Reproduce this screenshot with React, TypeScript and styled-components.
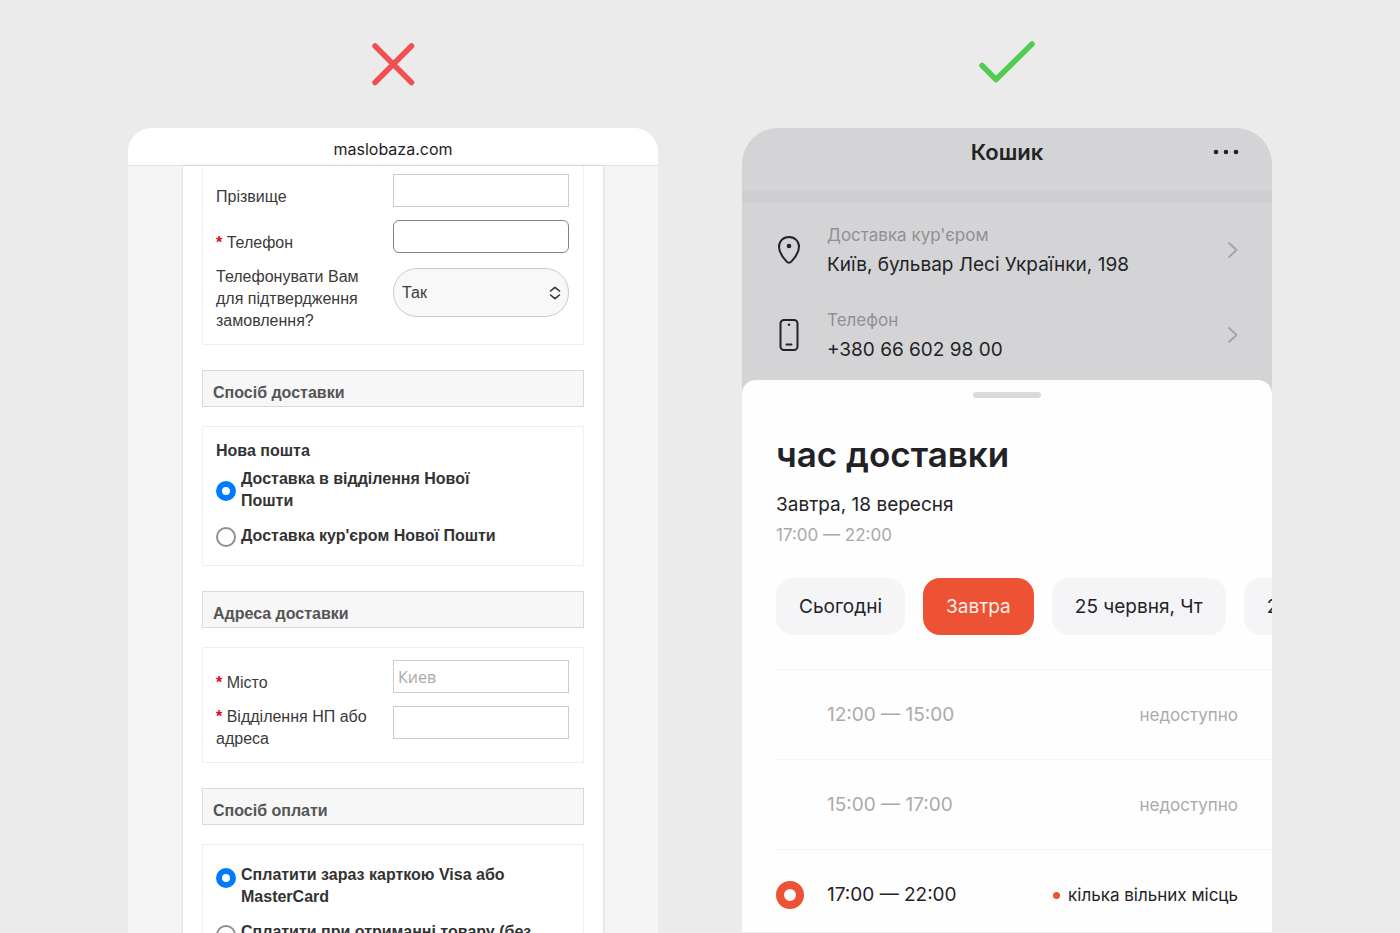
import React from "react";
import styled, { createGlobalStyle } from "styled-components";

const GlobalStyle = createGlobalStyle`
  *, *::before, *::after { box-sizing: border-box; }
  body { margin: 0; background: #ebebeb; }
  h1, h2, h3, p, ul, fieldset { margin: 0; padding: 0; }
  input, select, button { font: inherit; color: inherit; margin: 0; }
`;

const helvetica = `"Liberation Sans", Arial, sans-serif`;
const inter = `Inter, "Noto Sans", sans-serif`;

const Page = styled.main`
  display: grid;
  grid-template-columns: minmax(0, 1fr) minmax(0, 1fr);
  gap: 84px;
  height: 100vh;
  padding: 0 128px;
  overflow: hidden;
`;

const Example = styled.section`
  display: flex;
  flex-direction: column;
  min-width: 0;
`;

const Verdict = styled.div`
  display: flex;
  flex: none;
  justify-content: center;
  height: 128px;
  padding-top: 34px;
`;

/* ---------- browser page ---------- */

const Browser = styled.div`
  flex: none;
  overflow: hidden;
  border-radius: 24px 24px 0 0;
  background: #f5f5f5;
  color: #3a3a3a;
  font: 16px/22px ${helvetica};
`;

const AddressBar = styled.header`
  display: flex;
  align-items: center;
  justify-content: center;
  height: 38px;
  padding-top: 4px;
  border-bottom: 1px solid #e4e4e4;
  background: #fff;
  color: #1c1c1e;
  font: 16px/20px ${inter};
`;

const Sheet = styled.form`
  margin: 0 55px;
  padding: 0 19px 24px;
  background: #fff;
  box-shadow: 0 0 3px rgba(0, 0, 0, 0.18);
`;

const Box = styled.div<{ $cut?: boolean }>`
  display: flex;
  flex-direction: column;
  gap: 12px;
  margin-bottom: 25px;
  padding: ${(p) => (p.$cut ? "8px" : "12px")} 14px 12px 13px;
  border: 1px solid #efefef;
  border-top-width: ${(p) => (p.$cut ? "0" : "1px")};
`;

const SectionTitle = styled.h2`
  height: 37px;
  margin-bottom: 19px;
  padding: 11px 10px 0;
  border: 1px solid #d9d9d9;
  background: #f7f7f7;
  color: #555;
  font-size: 16px;
  line-height: 22px;
`;

const Field = styled.div<{ $tall?: boolean }>`
  display: grid;
  grid-template-columns: 1fr 176px;
  align-items: ${(p) => (p.$tall ? "start" : "end")};
  min-height: 34px;
`;

const Required = styled.span`
  color: #e30613;
  font-weight: bold;
`;

const TextInput = styled.input<{ $rounded?: boolean }>`
  width: 100%;
  height: 33px;
  align-self: start;
  padding: 0 4px;
  border: 1px solid ${(p) => (p.$rounded ? "#858585" : "#ccc")};
  border-radius: ${(p) => (p.$rounded ? "6px" : "0")};
  background: #fff;
  font: 16px/22px "Open Sans", "Noto Sans", sans-serif;
  &::placeholder { color: #a9a9a9; opacity: 1; }
`;

const SelectWrap = styled.div`
  display: grid;
  align-items: center;
  margin-top: 2px;
  > * { grid-area: 1 / 1; }
  > svg { justify-self: end; margin-right: 8px; pointer-events: none; }
`;

const Select = styled.select`
  appearance: none;
  width: 100%;
  height: 49px;
  padding: 0 8px;
  border: 1px solid #cbcbcb;
  border-radius: 24px;
  background: #f8f8f8;
`;

const OptionList = styled.fieldset`
  display: flex;
  flex-direction: column;
  gap: 13px;
  min-width: 0;
  border: 0;
`;

const Carrier = styled.h3`
  margin-bottom: -12px;
  color: #333;
  font-size: 16px;
  line-height: 22px;
`;

const Option = styled.label<{ $top?: boolean }>`
  display: flex;
  align-items: ${(p) => (p.$top ? "flex-start" : "center")};
  gap: 5px;
  color: #333;
  font-weight: bold;
  > input { margin-top: ${(p) => (p.$top ? "4px" : "1px")}; }
`;

const Radio = styled.input`
  appearance: none;
  flex: none;
  width: 20px;
  height: 20px;
  border: 2px solid #8f8f8f;
  border-radius: 50%;
  background: #fff;
  &:checked { border: 6px solid #007aff; }
`;

const BoxPad = styled.div`
  display: flex;
  flex-direction: column;
  gap: 18px;
`;

const DeliveryPad = styled(BoxPad)`
  padding: 1px 0 6px;
`;

const PaymentPad = styled(BoxPad)`
  padding: 7px 0;
`;

/* ---------- app screen ---------- */

const Screen = styled.div`
  flex: none;
  overflow: hidden;
  border-radius: 36px 36px 0 0;
  background: #d4d4d6;
  color: #232327;
  font: 19px/30px ${inter};
`;

const AppBar = styled.header`
  display: grid;
  grid-template-columns: 1fr auto 1fr;
  align-items: center;
  height: 75px;
  padding: 0 30px 15px;
  border-bottom: 12px solid #cfcfd1;
`;

const AppTitle = styled.h2`
  grid-column: 2;
  font-size: 22px;
  font-weight: 600;
  line-height: 28px;
`;

const MoreButton = styled.button`
  display: flex;
  justify-self: end;
  padding: 0;
  border: 0;
  background: none;
`;

const InfoRow = styled.a`
  display: grid;
  grid-template-columns: 51px 1fr auto;
  align-items: center;
  height: 85px;
  padding: 0 34px;
  color: inherit;
  text-decoration: none;
`;

const InfoLabel = styled.span`
  display: block;
  color: #909094;
  font-size: 17px;
`;

const InfoValue = styled.span`
  display: block;
`;

const InfoList = styled.nav`
  padding: 4px 0 3px;
`;

const BottomSheet = styled.div`
  padding: 12px 0 0 34px;
  border-radius: 14px 14px 0 0;
  background: #fefefe;
`;

const Handle = styled.div`
  width: 68px;
  height: 6px;
  margin: 0 auto;
  border-radius: 3px;
  background: #dadadb;
`;

const HandleRow = styled.div`
  padding-right: 34px;
`;

const SheetTitle = styled.h1`
  margin-top: 31px;
  color: #222226;
  font-size: 35px;
  font-weight: 600;
  line-height: 50px;
`;

const ChosenDay = styled.p`
  margin-top: 11px;
`;

const ChosenTime = styled.p`
  color: #a9a9ac;
  font-size: 17px;
`;

const Days = styled.div`
  display: flex;
  gap: 18px;
  margin-top: 28px;
  overflow: hidden;
`;

const Day = styled.button<{ $active?: boolean }>`
  flex: none;
  height: 57px;
  padding: 0 23px;
  border: 0;
  border-radius: 17px;
  background: ${(p) => (p.$active ? "#ec5233" : "#f5f5f7")};
  color: ${(p) => (p.$active ? "#fff0e6" : "#232327")};
  white-space: nowrap;
`;

const Slots = styled.fieldset`
  min-width: 0;
  margin-top: 34px;
  border: 0;
`;

const Slot = styled.label<{ $off?: boolean }>`
  display: grid;
  grid-template-columns: 51px 1fr auto;
  align-items: center;
  height: 90px;
  padding-right: 34px;
  border-top: 1px solid #f4f4f5;
  color: ${(p) => (p.$off ? "#aaaaad" : "#232327")};
  &:last-child { height: 83px; padding-top: 8px; }
`;

const SlotRadio = styled.input`
  appearance: none;
  width: 28px;
  height: 28px;
  border-radius: 50%;
  &:checked { border: 8px solid #ec5233; background: #fff; }
`;

const SlotNote = styled.span`
  display: flex;
  align-items: center;
  gap: 8px;
  font-size: 17px;
`;

const Dot = styled.i`
  width: 7px;
  height: 7px;
  border-radius: 50%;
  background: #ec5233;
`;

const Chevron = () => (
  <svg width="11" height="18" viewBox="0 0 11 18" fill="none" stroke="#a3a3a7" strokeWidth="1.8" strokeLinecap="round" strokeLinejoin="round" aria-hidden="true">
    <path d="M2 2 9.500 9 2 16" />
  </svg>
);

const PinIcon = () => (
  <svg width="26" height="30" viewBox="0 0 26 30" fill="none" aria-hidden="true">
    <path d="M13 2C7 2 3 6.300 3 11.800c0 5.400 4 10.900 7.500 14.600 1.600 1.700 3.400 1.700 5 0C19 22.700 23 17.200 23 11.800 23 6.300 19 2 13 2Z" stroke="#232327" strokeWidth="2" />
    <circle cx="13" cy="11" r="2.300" fill="#232327" />
  </svg>
);

const PhoneIcon = () => (
  <svg width="26" height="34" viewBox="0 0 26 34" fill="none" stroke="#232327" aria-hidden="true">
    <rect x="4.500" y="2" width="17" height="30" rx="3.500" strokeWidth="2" />
    <path d="M10.500 26.500h5" strokeWidth="2" strokeLinecap="round" />
    <circle cx="13" cy="6.800" r="1.200" fill="#232327" stroke="none" />
  </svg>
);

const star = <Required>* </Required>;

export default function App() {
  return (
    <>
      <GlobalStyle />
      <Page>
        <Example>
          <Verdict>
            <svg width="60" height="60" viewBox="0 0 60 60" stroke="#f05054" strokeWidth="5.500" strokeLinecap="round" role="img" aria-label="Погано">
              <path d="M12 12 48.500 48.500M48.500 12 12 48.500" />
            </svg>
          </Verdict>
          <Browser>
            <AddressBar>maslobaza.com</AddressBar>
            <Sheet>
              <Box $cut>
                <Field>
                  <label htmlFor="surname">Прізвище</label>
                  <TextInput id="surname" />
                </Field>
                <Field>
                  <label htmlFor="phone">{star}Телефон</label>
                  <TextInput id="phone" type="tel" $rounded />
                </Field>
                <Field $tall>
                  <label htmlFor="call">
                    Телефонувати Вам<br />для підтвердження<br />замовлення?
                  </label>
                  <SelectWrap>
                    <Select id="call" defaultValue="yes">
                      <option value="yes">Так</option>
                    </Select>
                    <svg width="12" height="14" viewBox="0 0 12 14" fill="none" stroke="#333" strokeWidth="1.600" strokeLinecap="round" strokeLinejoin="round" aria-hidden="true">
                      <path d="M1.500 5 6 1.300 10.500 5M1.500 9 6 12.700 10.500 9" />
                    </svg>
                  </SelectWrap>
                </Field>
              </Box>

              <SectionTitle>Спосіб доставки</SectionTitle>
              <Box>
                <DeliveryPad>
                  <Carrier>Нова пошта</Carrier>
                  <OptionList>
                    <Option>
                      <Radio type="radio" name="delivery" defaultChecked />
                      <span>Доставка в відділення Нової<br />Пошти</span>
                    </Option>
                    <Option>
                      <Radio type="radio" name="delivery" />
                      <span>Доставка кур'єром Нової Пошти</span>
                    </Option>
                  </OptionList>
                </DeliveryPad>
              </Box>

              <SectionTitle>Адреса доставки</SectionTitle>
              <Box>
                <Field>
                  <label htmlFor="city">{star}Місто</label>
                  <TextInput id="city" placeholder="Киев" />
                </Field>
                <Field $tall>
                  <label htmlFor="branch">{star}Відділення НП або<br />адреса</label>
                  <TextInput id="branch" />
                </Field>
              </Box>

              <SectionTitle>Спосіб оплати</SectionTitle>
              <Box>
                <PaymentPad>
                  <OptionList>
                    <Option $top>
                      <Radio type="radio" name="payment" defaultChecked />
                      <span>Сплатити зараз карткою Visa або<br />MasterCard</span>
                    </Option>
                    <Option $top>
                      <Radio type="radio" name="payment" />
                      <span>Сплатити при отриманні товару (без</span>
                    </Option>
                  </OptionList>
                </PaymentPad>
              </Box>
            </Sheet>
          </Browser>
        </Example>

        <Example>
          <Verdict>
            <svg width="60" height="60" viewBox="0 0 60 60" fill="none" stroke="#50cc50" strokeWidth="5.500" strokeLinecap="round" strokeLinejoin="round" role="img" aria-label="Добре">
              <path d="M5 31.500 19 45.500 55 10" />
            </svg>
          </Verdict>
          <Screen>
            <AppBar>
              <AppTitle>Кошик</AppTitle>
              <MoreButton type="button" aria-label="Ще">
                <svg width="32" height="8" viewBox="0 0 32 8" fill="#232327">
                  <circle cx="6" cy="4" r="2.300" />
                  <circle cx="16" cy="4" r="2.300" />
                  <circle cx="26" cy="4" r="2.300" />
                </svg>
              </MoreButton>
            </AppBar>
            <InfoList>
              <InfoRow href="#address">
                <PinIcon />
                <span>
                  <InfoLabel>Доставка кур'єром</InfoLabel>
                  <InfoValue>Київ, бульвар Лесі Українки, 198</InfoValue>
                </span>
                <Chevron />
              </InfoRow>
              <InfoRow href="#phone">
                <PhoneIcon />
                <span>
                  <InfoLabel>Телефон</InfoLabel>
                  <InfoValue>+380 66 602 98 00</InfoValue>
                </span>
                <Chevron />
              </InfoRow>
            </InfoList>
            <BottomSheet>
              <HandleRow><Handle /></HandleRow>
              <SheetTitle>час доставки</SheetTitle>
              <ChosenDay>Завтра, 18 вересня</ChosenDay>
              <ChosenTime>17:00 — 22:00</ChosenTime>
              <Days>
                <Day type="button">Сьогодні</Day>
                <Day type="button" $active>Завтра</Day>
                <Day type="button">25 червня, Чт</Day>
                <Day type="button">26 червня, Пт</Day>
              </Days>
              <Slots>
                <Slot $off>
                  <SlotRadio type="radio" name="slot" disabled />
                  <span>12:00 — 15:00</span>
                  <SlotNote>недоступно</SlotNote>
                </Slot>
                <Slot $off>
                  <SlotRadio type="radio" name="slot" disabled />
                  <span>15:00 — 17:00</span>
                  <SlotNote>недоступно</SlotNote>
                </Slot>
                <Slot>
                  <SlotRadio type="radio" name="slot" defaultChecked />
                  <span>17:00 — 22:00</span>
                  <SlotNote><Dot />кілька вільних місць</SlotNote>
                </Slot>
              </Slots>
            </BottomSheet>
          </Screen>
        </Example>
      </Page>
    </>
  );
}
